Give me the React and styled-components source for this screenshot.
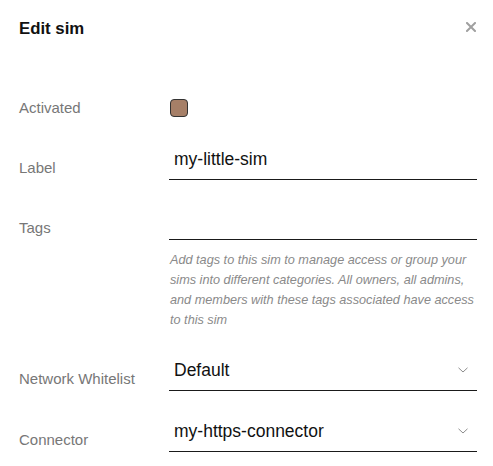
import styled, { createGlobalStyle } from "styled-components";

const GlobalStyle = createGlobalStyle`
  html, body {
    margin: 0;
    padding: 0;
    background: #ffffff;
    font-family: "Liberation Sans", Arial, Helvetica, sans-serif;
  }
  * {
    box-sizing: border-box;
  }
`;

const Modal = styled.div`
  width: 493px;
  padding: 0 16px 0 19px;
`;

const Header = styled.div`
  display: flex;
  justify-content: space-between;
  align-items: center;
  height: 58px;
`;

const Title = styled.h2`
  margin: 0;
  font-size: 16.8px;
  font-weight: 700;
  color: #111111;
`;

const CloseButton = styled.button`
  display: flex;
  align-items: center;
  justify-content: center;
  width: 12px;
  height: 12px;
  margin-top: -4px;
  padding: 0;
  border: none;
  background: none;
  cursor: pointer;
`;

const Form = styled.div`
  display: flex;
  flex-direction: column;
  padding-top: 41px;
`;

const Row = styled.div`
  display: grid;
  grid-template-columns: 150px 1fr;
  align-items: ${(p) => (p.$center ? "center" : "start")};
  margin-bottom: ${(p) => p.$gap || 0}px;
`;

const Label = styled.label`
  font-size: 15px;
  line-height: 18px;
  color: #777777;
  padding-top: ${(p) => (p.$center ? 0 : 14)}px;
`;

const Checkbox = styled.span`
  display: block;
  width: 18px;
  height: 18px;
  border: 1px solid #333333;
  border-radius: 4px;
  background: #a67f67;
  margin-left: 1px;
`;

const TextInput = styled.input`
  display: block;
  width: 100%;
  height: 35px;
  padding: 0 0 6px 5px;
  border: none;
  border-bottom: 1px solid #1a1a1a;
  font-family: inherit;
  font-size: 17.5px;
  color: #111111;
  background: transparent;
  outline: none;
`;

const Select = styled.div`
  display: flex;
  align-items: center;
  justify-content: space-between;
  height: 35px;
  padding: 0 9px 6px 5px;
  border-bottom: 1px solid #1a1a1a;
  font-size: 17.5px;
  color: #111111;
  cursor: pointer;
`;

const Help = styled.p`
  margin: 10px 0 0 1px;
  font-size: 12.7px;
  line-height: 20px;
  font-style: italic;
  color: #8a8a8a;
`;

function Chevron() {
  return (
    <svg width="10" height="6" viewBox="0 0 10 6">
      <polyline points="0.5,0.8 5,5 9.5,0.8" fill="none" stroke="#8c8c8c" strokeWidth="1" />
    </svg>
  );
}

function CloseIcon() {
  return (
    <svg width="10" height="10" viewBox="0 0 10 10">
      <path d="M1 1 L9 9 M9 1 L1 9" stroke="#a0a0a0" strokeWidth="2" strokeLinecap="square" />
    </svg>
  );
}

export default function App() {
  return (
    <Modal>
      <GlobalStyle />
      <Header>
        <Title>Edit sim</Title>
        <CloseButton aria-label="Close">
          <CloseIcon />
        </CloseButton>
      </Header>
      <Form>
        <Row $center $gap={28}>
          <Label $center>Activated</Label>
          <Checkbox />
        </Row>
        <Row $gap={25}>
          <Label>Label</Label>
          <TextInput defaultValue="my-little-sim" />
        </Row>
        <Row $gap={26}>
          <Label>Tags</Label>
          <div>
            <TextInput defaultValue="" />
            <Help>
              Add tags to this sim to manage access or group your sims into
              different categories. All owners, all admins, and members with
              these tags associated have access to this sim
            </Help>
          </div>
        </Row>
        <Row $gap={26}>
          <Label>Network Whitelist</Label>
          <Select>
            <span>Default</span>
            <Chevron />
          </Select>
        </Row>
        <Row>
          <Label>Connector</Label>
          <Select>
            <span>my-https-connector</span>
            <Chevron />
          </Select>
        </Row>
      </Form>
    </Modal>
  );
}
